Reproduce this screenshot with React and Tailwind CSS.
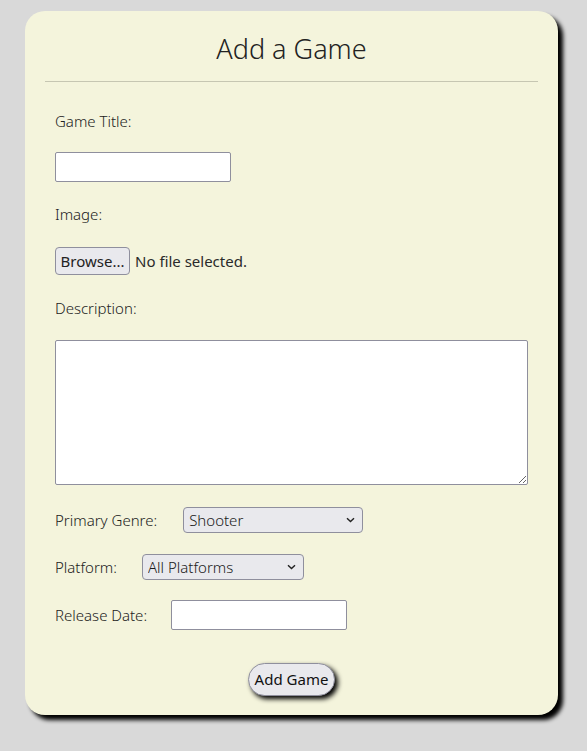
import React from "react";

function Chevron() {
  return (
    <svg className="pointer-events-none absolute right-[8px] top-1/2 -translate-y-1/2" width="9" height="6" viewBox="0 0 9 6">
      <path d="M1 1.2 L4.5 4.6 L8 1.2" fill="none" stroke="#222" strokeWidth="1.4" />
    </svg>
  );
}

function Select({ value, width }) {
  return (
    <div className="relative inline-block" style={{ width }}>
      <select
        defaultValue={value}
        className="h-[26px] w-full appearance-none rounded-[4px] border border-[#8f8f9d] bg-[#e9e9ed] pl-[5px] pr-[20px] text-[15px] leading-none text-[#1a1a1a] outline-none"
      >
        <option>{value}</option>
      </select>
      <Chevron />
    </div>
  );
}

export default function App() {
  return (
    <div
      className="min-h-[751px] w-full bg-[#d9d9d9] pt-[11px] text-[#222]"
      style={{ fontFamily: '"Noto Sans", "Open Sans", sans-serif' }}
    >
      <div className="ml-[25px] w-[533px] rounded-[20px] bg-[#f4f4dc] px-[20px] pb-[19px] pt-[20px] shadow-[5px_5px_4px_#000]">
        <h1 className="text-center text-[27px] font-light leading-[36px] text-[#222]">Add a Game</h1>
        <div className="mt-[14px] h-px bg-[#c6c6b2]" />
        <form className="px-[10px] pt-[29px] text-[15px] font-light text-[#222]">
          <div className="leading-[20px]">Game Title:</div>
          <input
            type="text"
            className="mt-[21px] block h-[30px] w-[176px] rounded-[2px] border border-[#8f8f9d] bg-white"
          />
          <div className="mt-[22px] leading-[20px]">Image:</div>
          <div className="mt-[23px] flex items-center gap-[5px]">
            <button
              type="button"
              className="h-[28px] w-[75px] rounded-[4px] border border-[#8f8f9d] bg-[#e9e9ed] text-[15px] font-normal leading-none text-[#222]"
            >
              Browse...
            </button>
            <span className="text-[15px] font-normal text-[#2a2a2a]">No file selected.</span>
          </div>
          <div className="mt-[23px] leading-[20px]">Description:</div>
          <textarea className="mt-[22px] block h-[145px] w-[473px] rounded-[2px] border border-[#8f8f9d] bg-white" />
          <div className="mt-[22px] flex items-center gap-[26px]">
            <span>Primary Genre:</span>
            <Select value="Shooter" width="180px" />
          </div>
          <div className="mt-[21px] flex items-center gap-[25px]">
            <span>Platform:</span>
            <Select value="All Platforms" width="162px" />
          </div>
          <div className="mt-[20px] flex items-center gap-[24px]">
            <span>Release Date:</span>
            <input
              type="text"
              className="block h-[30px] w-[176px] rounded-[2px] border border-[#8f8f9d] bg-white"
            />
          </div>
          <div className="mt-[33px] flex justify-center">
            <button
              type="button"
              className="h-[33px] rounded-full border border-[#8f8f9d] bg-[#e9e9ed] px-[6px] text-[15px] font-normal leading-none text-[#111] shadow-[3px_3px_5px_#000]"
            >
              Add Game
            </button>
          </div>
        </form>
      </div>
    </div>
  );
}
